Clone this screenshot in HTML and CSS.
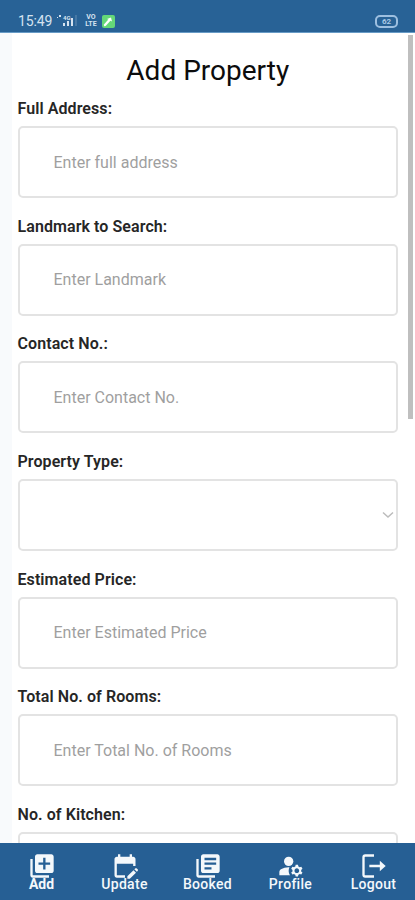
FILE: index.html
```
<!DOCTYPE html>
<html lang="en">
<head>
<meta charset="utf-8">
<meta name="viewport" content="width=device-width, initial-scale=1">
<title>Add Property</title>
<link rel="stylesheet" href="styles.css">
</head>
<body>
<div class="app">
  <header class="status">
    <span class="clock">15:49</span>
    <svg class="signal" width="20" height="14" viewBox="0 0 20 14" fill="currentColor"><path d="M2 1h2v2h-2zM0 3h1v1h-1zM6 9h2v3H6zM10 7h2v5h-2zM14 4h2v8h-2z"/><path d="M19 1v11" stroke="currentColor" opacity=".35"/><text x="6" y="6" font-size="6" font-weight="700">4G</text></svg>
    <span class="volte"><span>VO</span><span>LTE</span></span>
    <svg class="badge" width="13" height="13" viewBox="0 0 13 13"><rect width="13" height="13" rx="2" fill="#65d778"/><path d="M3 10l4.500-5" stroke="#fff" stroke-width="2.400" stroke-linecap="round"/><path d="M5 4l4-1.500 1 4z" fill="#fff"/></svg>
    <span class="battery">62</span>
  </header>
  <main class="page">
    <form class="card">
      <h1 class="title">Add Property</h1>
      <div class="field"><label class="label" for="address">Full Address:</label><input class="input" id="address" placeholder="Enter full address"></div>
      <div class="field"><label class="label" for="landmark">Landmark to Search:</label><input class="input" id="landmark" placeholder="Enter Landmark"></div>
      <div class="field"><label class="label" for="contact">Contact No.:</label><input class="input" id="contact" placeholder="Enter Contact No."></div>
      <div class="field"><label class="label">Property Type:</label>
        <div class="input select"><svg width="12" height="8" viewBox="0 0 12 8" fill="none" stroke="#bcbcbc" stroke-width="1.500"><path d="M1 1.500l5 4.500 5-4.500"/></svg></div></div>
      <div class="field"><label class="label" for="price">Estimated Price:</label><input class="input" id="price" placeholder="Enter Estimated Price"></div>
      <div class="field"><label class="label" for="rooms">Total No. of Rooms:</label><input class="input" id="rooms" placeholder="Enter Total No. of Rooms"></div>
      <div class="field"><label class="label" for="kitchen">No. of Kitchen:</label><input class="input" id="kitchen"></div>
    </form>
    <div class="scroll"><div class="thumb"></div></div>
  </main>
  <nav class="tabs">
    <a class="tab active"><svg width="28" height="28" viewBox="0 0 24 24" fill="currentColor"><path d="M4 6H2v14c0 1.100.9 2 2 2h14v-2H4V6z"/><path d="M20 2H8c-1.100 0-2 .9-2 2v12c0 1.100.9 2 2 2h12c1.100 0 2-.9 2-2V4c0-1.100-.9-2-2-2zm-1 9h-4v4h-2v-4H9V9h4V5h2v4h4v2z"/></svg><span>Add</span></a>
    <a class="tab"><svg width="28" height="28" viewBox="0 0 24 24" fill="currentColor"><path d="M12 22H5c-1.110 0-2-.9-2-2V6c0-1.100.9-2 2-2h1V2h2v2h8V2h2v2h1c1.100 0 2 .9 2 2v6h-2v-2H5v10h7v2zm10.130-5.010l.71-.71c.39-.39.39-1.020 0-1.410l-.71-.71c-.39-.39-1.020-.39-1.410 0l-.71.71 2.120 2.120zm-.71.71l-5.300 5.300H14v-2.120l5.300-5.300 2.120 2.120z"/></svg><span>Update</span></a>
    <a class="tab"><svg width="28" height="28" viewBox="0 0 24 24" fill="currentColor"><path d="M4 6H2v14c0 1.100.9 2 2 2h14v-2H4V6z"/><path d="M20 2H8c-1.100 0-2 .9-2 2v12c0 1.100.9 2 2 2h12c1.100 0 2-.9 2-2V4c0-1.100-.9-2-2-2zm-1 9H9V9h10v2zm-4 4H9v-2h6v2zm4-8H9V5h10v2z"/></svg><span>Booked</span></a>
    <a class="tab"><svg width="28" height="28" viewBox="0 0 24 24" fill="currentColor"><circle cx="10" cy="8" r="4"/><path d="M10.670 13.020C10.450 13.010 10.230 13 10 13c-2.420 0-4.680.67-6.610 1.820-.88.52-1.390 1.500-1.390 2.530V20h9.260C10.470 18.870 10 17.490 10 16c0-1.070.25-2.070.67-2.980zM20.750 16c0-.22-.03-.42-.06-.63l1.140-1.010-1-1.730-1.450.49c-.32-.27-.68-.48-1.080-.63L18 11h-2l-.3 1.490c-.4.15-.76.36-1.080.63l-1.450-.49-1 1.730 1.140 1.010c-.03.21-.06.41-.06.63s.03.42.06.63l-1.140 1.010 1 1.730 1.450-.49c.32.27.68.48 1.080.63L16 21h2l.3-1.490c.4-.15.76-.36 1.080-.63l1.450.49 1-1.730-1.140-1.010c.03-.21.06-.41.06-.63zM17 18c-1.100 0-2-.9-2-2s.9-2 2-2 2 .9 2 2-.9 2-2 2z"/></svg><span>Profile</span></a>
    <a class="tab"><svg width="28" height="28" viewBox="0 0 24 24" fill="none" stroke="currentColor" stroke-width="2"><path d="M12 3H4.500Q3 3 3 4.500v15Q3 21 4.500 21H12M8 12h11"/><path d="M17 7.500l5 4.500-5 4.500z" fill="currentColor" stroke="none"/></svg><span>Logout</span></a>
  </nav>
</div>
</body>
</html>
```
FILE: styles.css
```
* { box-sizing: border-box; }
body { margin: 0; font-family: Roboto, "Liberation Sans", sans-serif; background: #fff; }
.app { width: 415px; height: 900px; display: flex; flex-direction: column; overflow: hidden; }

.status { height: 33px; flex: none; display: flex; align-items: center; padding: 10px 17px 0 18px; background: #286296; color: #d5e3f0; border-bottom: 1px solid #679bc6; }
.clock { width: 39px; font-size: 14px; letter-spacing: -0.1px; }
.signal { display: block; }
.volte { width: 14px; margin: 0 4px 0 7px; display: flex; flex-direction: column; align-items: center; font-size: 7px; font-weight: 700; line-height: 7px; }
.badge { display: block; }
.battery { margin-left: auto; width: 23px; height: 13px; border: 2px solid #9dbfe0; border-radius: 5px; font-size: 8px; font-weight: 700; line-height: 9px; text-align: center; color: #a9c9e6; }

.page { flex: 1; min-height: 0; display: flex; overflow: hidden; background: #f8fafc; padding-left: 12px; }
.card { flex: 1; background: #fff; padding: 21px 10px 0 5.500px; }
.title { margin: 0 0 12px; font-size: 28px; line-height: 33px; font-weight: 400; text-align: center; color: #0c0c0c; }
.field { height: 117.7px; display: flex; flex-direction: column; }
.label { font-size: 16px; line-height: 20px; font-weight: 600; letter-spacing: 0.08px; color: #262626; margin-bottom: 7px; }
.input { width: 100%; height: 72px; flex: none; border: 2px solid #e3e3e3; border-radius: 5px; padding: 0 34px; font: 400 16px Roboto, sans-serif; background: #fff; outline: 0; }
.input::placeholder { color: #9f9f9f; opacity: 1; }
.select { display: flex; align-items: center; justify-content: flex-end; padding: 0 2px; }
.scroll { width: 7px; flex: none; padding-top: 2px; background: #fff; }
.thumb { width: 5px; height: 384px; background: #bfbfbf; }

.tabs { height: 57px; flex: none; display: grid; grid-template-columns: repeat(5, 1fr); background: #265f94; color: #f4f8fb; }
.tab { display: flex; flex-direction: column; align-items: center; padding-top: 9px; font-size: 14px; line-height: 16px; letter-spacing: 0.3px; font-weight: 500; }
.tab span { margin-top: -4px; }
.active { font-weight: 700; letter-spacing: 0; }
```
